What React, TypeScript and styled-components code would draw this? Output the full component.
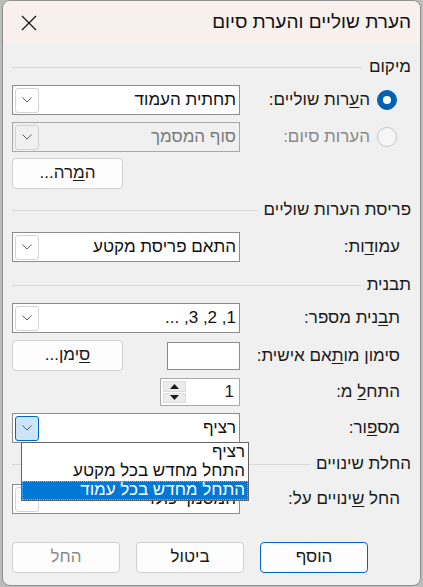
import React from 'react';
import styled, { createGlobalStyle } from 'styled-components';

const GlobalStyle = createGlobalStyle`
  html, body {
    margin: 0;
    padding: 0;
    background: #bcbcbc;
  }
  body {
    font-family: "Liberation Sans", "DejaVu Sans", sans-serif;
  }
`;

const Window = styled.div`
  position: relative;
  box-sizing: border-box;
  width: 419px;
  height: 586px;
  margin-left: 2px;
  border: 1px solid #8f8f8f;
  border-radius: 8px;
  overflow: hidden;
  background: #f0f0f0;
  direction: rtl;
  display: flex;
  flex-direction: column;
  color: #1a1a1a;
  font-size: 17px;
`;

const TitleBar = styled.div`
  height: 43px;
  flex: none;
  background: #f7f0ed;
  display: flex;
  align-items: center;
  justify-content: space-between;
  padding: 0 9px 0 18px;
`;

const Title = styled.div`
  font-size: 19px;
  color: #111;
  padding-bottom: 2px;
`;

const Body = styled.div`
  flex: 1;
  display: flex;
  flex-direction: column;
  padding: 0 9px;
`;

const SectionHeader = styled.div<{ $top: number }>`
  display: flex;
  align-items: center;
  gap: 6px;
  height: 20px;
  margin-top: ${({ $top }) => $top}px;
  white-space: nowrap;
  &::after {
    content: '';
    flex: 1;
    height: 1px;
    background: #d9d9d9;
  }
`;

const Row = styled.div<{ $top: number; $h?: number }>`
  display: flex;
  align-items: center;
  justify-content: space-between;
  height: ${({ $h }) => $h ?? 30}px;
  margin-top: ${({ $top }) => $top}px;
`;

const LabelGroup = styled.div<{ $inset: number; $disabled?: boolean }>`
  display: flex;
  align-items: center;
  gap: 7px;
  padding-right: ${({ $inset }) => $inset}px;
  color: ${({ $disabled }) => ($disabled ? '#8a8a8a' : '#1a1a1a')};
  white-space: nowrap;
`;

const Mn = styled.span`
  text-decoration: underline;
  text-underline-offset: 2px;
`;

const Radio = styled.span<{ $checked?: boolean }>`
  box-sizing: border-box;
  width: 20px;
  height: 20px;
  border-radius: 50%;
  display: flex;
  align-items: center;
  justify-content: center;
  background: ${({ $checked }) => ($checked ? '#0063b1' : '#f6f6f6')};
  border: 1px solid ${({ $checked }) => ($checked ? '#0063b1' : '#c4c4c4')};
  &::after {
    content: '';
    display: ${({ $checked }) => ($checked ? 'block' : 'none')};
    width: 8px;
    height: 8px;
    border-radius: 50%;
    background: #fff;
  }
`;

const ControlSlot = styled.div`
  width: 228px;
  display: flex;
  align-items: center;
  justify-content: space-between;
  position: relative;
`;

const SelectBox = styled.div<{ $disabled?: boolean }>`
  box-sizing: border-box;
  width: 228px;
  height: 30px;
  border: 1px solid ${({ $disabled }) => ($disabled ? '#a9a9a9' : '#8c8c8c')};
  background: ${({ $disabled }) => ($disabled ? '#f0f0f0' : '#fff')};
  color: ${({ $disabled }) => ($disabled ? '#7a7a7a' : '#111')};
  display: flex;
  align-items: center;
  padding: 0 3px 0 2px;
  overflow: hidden;
`;

const SelectValue = styled.div`
  flex: 1;
  white-space: nowrap;
  overflow: hidden;
  padding-bottom: 1px;
`;

const DropButton = styled.div<{ $focused?: boolean; $disabled?: boolean }>`
  box-sizing: border-box;
  width: 24px;
  height: 25px;
  border-radius: 3px;
  border: 1px solid ${({ $focused }) => ($focused ? '#0067c0' : '#d3d3d3')};
  background: ${({ $focused, $disabled }) =>
    $focused ? '#cce4f7' : $disabled ? '#f0f0f0' : '#fff'};
  display: flex;
  align-items: center;
  justify-content: center;
`;

const Chevron = () => (
  <svg width="10" height="6" viewBox="0 0 10 6">
    <path d="M0.5 0.5 L5 5 L9.5 0.5" fill="none" stroke="#5f5f5f" strokeWidth="1" />
  </svg>
);

const Select: React.FC<{ value: string; disabled?: boolean; focused?: boolean }> = ({
  value,
  disabled,
  focused,
}) => (
  <SelectBox $disabled={disabled}>
    <SelectValue>{value}</SelectValue>
    <DropButton $focused={focused} $disabled={disabled}>
      <Chevron />
    </DropButton>
  </SelectBox>
);

const Button = styled.div<{ $primary?: boolean; $disabled?: boolean }>`
  box-sizing: border-box;
  width: 111px;
  height: 31px;
  border-radius: 4px;
  border: 1px solid ${({ $primary }) => ($primary ? '#0067c0' : '#d0d0d0')};
  background: #fdfdfd;
  color: ${({ $disabled }) => ($disabled ? '#8a8a8a' : '#1a1a1a')};
  display: flex;
  align-items: center;
  justify-content: center;
  padding-bottom: 1px;
`;

const TextInput = styled.div`
  box-sizing: border-box;
  width: 73px;
  height: 28px;
  background: #fff;
  border: 1px solid #8c8c8c;
`;

const Spinner = styled.div`
  box-sizing: border-box;
  width: 80px;
  height: 28px;
  background: #fff;
  border: 1px solid #a9a9a9;
  display: flex;
  align-items: center;
  padding: 2px 5px 2px 2px;
`;

const SpinValue = styled.div`
  flex: 1;
`;

const SpinButtons = styled.div`
  width: 23px;
  height: 22px;
  display: flex;
  flex-direction: column;
  gap: 1px;
`;

const SpinButton = styled.div`
  flex: 1;
  background: #ececec;
  border: 1px solid #dcdcdc;
  display: flex;
  align-items: center;
  justify-content: center;
`;

const Arrow = ({ up }: { up?: boolean }) => (
  <svg width="9" height="5" viewBox="0 0 9 5">
    <path d={up ? 'M0 5 L4.5 0 L9 5 Z' : 'M0 0 L4.5 5 L9 0 Z'} fill="#1a1a1a" />
  </svg>
);

const DropList = styled.div`
  position: absolute;
  top: 29px;
  left: 9px;
  width: 228px;
  box-sizing: border-box;
  background: #fff;
  border: 1px solid #646464;
  z-index: 5;
`;

const DropItem = styled.div<{ $selected?: boolean }>`
  height: 19px;
  line-height: 18px;
  padding-right: 3px;
  white-space: nowrap;
  color: ${({ $selected }) => ($selected ? '#fff' : '#111')};
  background: ${({ $selected }) => ($selected ? '#0078d7' : 'transparent')};
  outline: ${({ $selected }) => ($selected ? '1px dotted #f39c34' : 'none')};
  outline-offset: -1px;
`;

const Footer = styled.div`
  display: flex;
  gap: 16px;
  padding: 0 43px 12px 0;
  margin-top: auto;
`;

export default function App() {
  return (
    <>
      <GlobalStyle />
      <Window>
        <TitleBar>
          <Title>הערת שוליים והערת סיום</Title>
          <svg width="16" height="16" viewBox="0 0 16 16">
            <path d="M1 1 L15 15 M15 1 L1 15" stroke="#1a1a1a" strokeWidth="1.3" />
          </svg>
        </TitleBar>
        <Body>
          <SectionHeader $top={13}>מיקום</SectionHeader>
          <Row $top={8}>
            <LabelGroup $inset={14}>
              <Radio $checked />
              <span>
                ה<Mn>ע</Mn>רות שוליים:
              </span>
            </LabelGroup>
            <Select value="תחתית העמוד" />
          </Row>
          <Row $top={7}>
            <LabelGroup $inset={14} $disabled>
              <Radio />
              <span>הערות סיום:</span>
            </LabelGroup>
            <Select value="סוף המסמך" disabled />
          </Row>
          <Row $top={6} $h={31}>
            <span />
            <ControlSlot>
              <span />
              <Button>
                ה<Mn>מ</Mn>רה...
              </Button>
            </ControlSlot>
          </Row>
          <SectionHeader $top={11}>פריסת הערות שוליים</SectionHeader>
          <Row $top={12}>
            <LabelGroup $inset={11}>
              <span>
                עמו<Mn>ד</Mn>ות:
              </span>
            </LabelGroup>
            <Select value="התאם פריסת מקטע" />
          </Row>
          <SectionHeader $top={13}>תבנית</SectionHeader>
          <Row $top={8}>
            <LabelGroup $inset={11}>
              <span>
                ת<Mn>ב</Mn>נית מספר:
              </span>
            </LabelGroup>
            <Select value="1, 2, 3, ..." />
          </Row>
          <Row $top={7} $h={31}>
            <LabelGroup $inset={11}>
              <span>
                סימון מו<Mn>ת</Mn>אם אישית:
              </span>
            </LabelGroup>
            <ControlSlot>
              <TextInput />
              <Button>
                <Mn>ס</Mn>ימן...
              </Button>
            </ControlSlot>
          </Row>
          <Row $top={7} $h={28}>
            <LabelGroup $inset={11}>
              <span>
                התח<Mn>ל</Mn> מ:
              </span>
            </LabelGroup>
            <ControlSlot>
              <Spinner>
                <SpinValue>1</SpinValue>
                <SpinButtons>
                  <SpinButton>
                    <Arrow up />
                  </SpinButton>
                  <SpinButton>
                    <Arrow />
                  </SpinButton>
                </SpinButtons>
              </Spinner>
            </ControlSlot>
          </Row>
          <Row $top={7}>
            <LabelGroup $inset={11}>
              <span>
                מס<Mn>פ</Mn>ור:
              </span>
            </LabelGroup>
            <ControlSlot>
              <Select value="רציף" focused />
              <DropList>
                <DropItem>רציף</DropItem>
                <DropItem>התחל מחדש בכל מקטע</DropItem>
                <DropItem $selected>התחל מחדש בכל עמוד</DropItem>
              </DropList>
            </ControlSlot>
          </Row>
          <SectionHeader $top={11}>החלת שינויים</SectionHeader>
          <Row $top={10}>
            <LabelGroup $inset={11}>
              <span>
                החל <Mn>ש</Mn>ינויים על:
              </span>
            </LabelGroup>
            <Select value="המסמך כולו" />
          </Row>
          <Footer>
            <Button $primary>הוסף</Button>
            <Button>ביטול</Button>
            <Button $disabled>החל</Button>
          </Footer>
        </Body>
      </Window>
    </>
  );
}
